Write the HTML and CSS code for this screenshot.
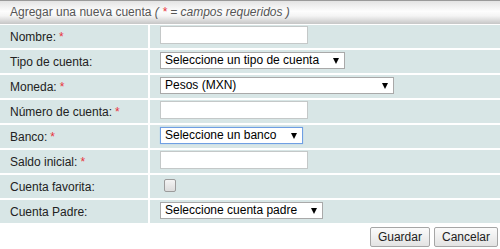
FILE: index.html
```html
<!DOCTYPE html>
<html lang="es">
<head>
    <meta charset="UTF-8">
    <meta name="viewport" content="width=device-width, initial-scale=1.0">
    <title>Agregar una nueva cuenta</title>
    <link rel="stylesheet" href="styles.css">
</head>
<body>
    <form class="account-form">
        <div class="form-title">
            Agregar una nueva cuenta <em>( <span class="req">*</span> = campos requeridos )</em>
        </div>

        <div class="form-grid">
            <label class="field-label" for="nombre">Nombre: <span class="req">*</span></label>
            <div class="field-value">
                <input type="text" id="nombre" class="text-input">
            </div>

            <label class="field-label" for="tipo">Tipo de cuenta:</label>
            <div class="field-value">
                <span class="select-wrap select-tipo">
                    <select id="tipo"><option>Seleccione un tipo de cuenta</option></select>
                </span>
            </div>

            <label class="field-label" for="moneda">Moneda: <span class="req">*</span></label>
            <div class="field-value">
                <span class="select-wrap select-moneda">
                    <select id="moneda"><option>Pesos (MXN)</option></select>
                </span>
            </div>

            <label class="field-label" for="numero">Número de cuenta: <span class="req">*</span></label>
            <div class="field-value">
                <input type="text" id="numero" class="text-input">
            </div>

            <label class="field-label" for="banco">Banco: <span class="req">*</span></label>
            <div class="field-value">
                <span class="select-wrap select-banco">
                    <select id="banco" class="is-focused"><option>Seleccione un banco</option></select>
                </span>
            </div>

            <label class="field-label" for="saldo">Saldo inicial: <span class="req">*</span></label>
            <div class="field-value">
                <input type="text" id="saldo" class="text-input">
            </div>

            <label class="field-label" for="favorita">Cuenta favorita:</label>
            <div class="field-value">
                <input type="checkbox" id="favorita" class="check">
            </div>

            <label class="field-label" for="padre">Cuenta Padre:</label>
            <div class="field-value">
                <span class="select-wrap select-padre">
                    <select id="padre"><option>Seleccione cuenta padre</option></select>
                </span>
            </div>
        </div>

        <div class="form-actions">
            <button type="button" class="btn">Guardar</button>
            <button type="button" class="btn">Cancelar</button>
        </div>
    </form>
</body>
</html>
```

FILE: styles.css
```css
body {
    margin: 0;
    padding: 0;
    background-color: #fff;
    font-family: "Liberation Sans", Arial, sans-serif;
    font-size: 12px;
    color: #222;
}

.account-form {
    width: 500px;
}

.form-title {
    height: 23px;
    line-height: 23px;
    border-top: 1px solid #9a9a9a;
    padding-left: 10px;
    color: #555;
    background: linear-gradient(#e4e4e4, #fdfdfd 45%, #f4f4f4 65%, #c6c6c6);
    margin-bottom: 1px;
}

.form-title em {
    font-style: italic;
}

.req {
    color: #e8333c;
}

.form-grid {
    display: grid;
    grid-template-columns: 148px 1fr;
    grid-auto-rows: 23px;
    gap: 2px;
}

.field-label {
    display: flex;
    align-items: center;
    padding-left: 10px;
    background-color: #d8e6e6;
    color: #222;
}

.field-label .req {
    margin-left: 3px;
}

.field-value {
    display: flex;
    align-items: flex-start;
    padding: 1px 0 0 10px;
    background-color: #d8e6e6;
}

.text-input {
    box-sizing: border-box;
    width: 148px;
    height: 18px;
    margin: 0;
    border: 1px solid #c4c8c8;
    background-color: #fff;
    padding: 0 3px;
    font: inherit;
}

.select-wrap {
    position: relative;
    display: inline-block;
    margin-top: 1px;
}

.select-wrap::after {
    content: "";
    position: absolute;
    right: 6px;
    top: 6px;
    border-left: 3.5px solid transparent;
    border-right: 3.5px solid transparent;
    border-top: 6px solid #000;
    pointer-events: none;
}

.select-wrap select {
    -webkit-appearance: none;
    appearance: none;
    box-sizing: border-box;
    display: block;
    height: 17px;
    margin: 0;
    padding: 0 0 0 4px;
    border: 1px solid #a9a9a9;
    border-radius: 0;
    background-color: #fff;
    font-family: "Liberation Sans", Arial, sans-serif;
    font-size: 12px;
    line-height: 15px;
    color: #000;
}

.select-tipo select { width: 185px; }
.select-moneda select { width: 234px; }
.select-banco select { width: 143px; }
.select-padre select { width: 163px; }

.select-wrap select.is-focused {
    border-color: #6f9fe3;
    box-shadow: 0 0 1px #9cc0ee;
}

.check {
    -webkit-appearance: none;
    appearance: none;
    box-sizing: border-box;
    width: 12px;
    height: 13px;
    margin: 3px 0 0 4px;
    border: 1px solid #9b9b9b;
    border-radius: 2px;
    background: linear-gradient(#f4f4f4, #dcdcdc);
}

.form-actions {
    display: flex;
    justify-content: flex-end;
    gap: 4px;
    padding: 4px 2px 0 0;
}

.btn {
    box-sizing: border-box;
    height: 20px;
    padding: 0 7px;
    border: 1px solid #a6a6a6;
    border-radius: 2px;
    background: linear-gradient(#fbfbfb, #e3e3e3);
    font-family: "Liberation Sans", Arial, sans-serif;
    font-size: 12px;
    color: #222;
    cursor: pointer;
}
```
